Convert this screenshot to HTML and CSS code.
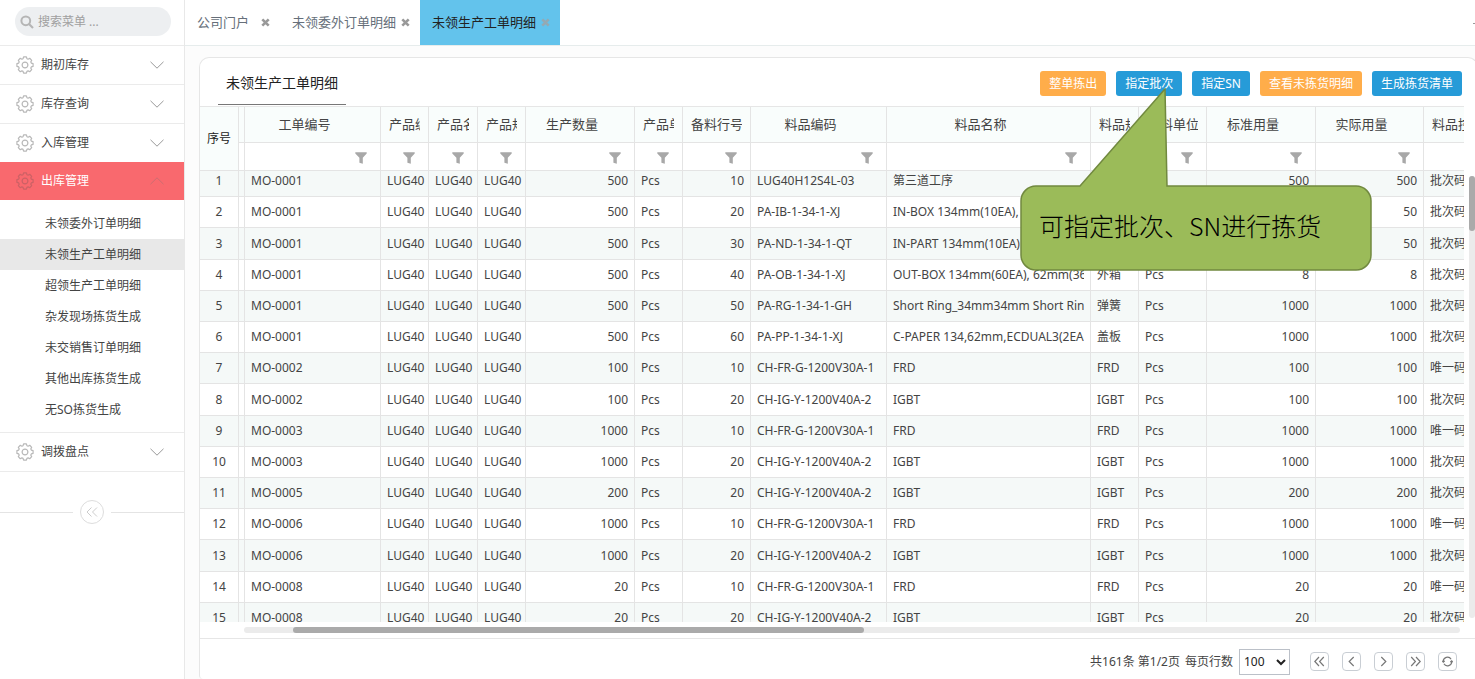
FILE: index.html
```html
<!DOCTYPE html>
<html lang="zh-CN">
<head>
<meta charset="utf-8">
<title>未领生产工单明细</title>
<link rel="stylesheet" href="styles.css">
</head>
<body>
<svg class="defs" width="0" height="0" aria-hidden="true">
  <symbol id="gear" viewBox="0 0 18 18"><g fill="none" stroke="currentColor" stroke-width="1.2" stroke-linejoin="round" transform="translate(9 9)"><path d="M-1.420-8.080H1.420L1.930-6.310 3.100-5.830 4.700-6.720 6.720-4.700 5.830-3.100 6.310-1.930 8.080-1.420V1.420L6.310 1.930 5.830 3.100 6.720 4.700 4.700 6.720 3.100 5.830 1.930 6.310 1.420 8.080H-1.420L-1.930 6.310-3.100 5.830-4.700 6.720-6.720 4.700-5.830 3.100-6.310 1.930-8.080 1.420V-1.420L-6.310-1.930-5.830-3.100-6.720-4.700-4.700-6.720-3.100-5.830-1.930-6.310Z"/><circle r="2.900"/></g></symbol>
  <symbol id="chev" viewBox="0 0 14 8"><path d="M.5.8 7 7.200 13.500.8" fill="none" stroke="currentColor"/></symbol>
  <symbol id="funnel" viewBox="0 0 12 12"><path d="M.3.3h11.400v1.200L7.800 5.700V11.700L4.400 10.800V5.700L.3 1.500z" fill="currentColor"/></symbol>
  <symbol id="cross" viewBox="0 0 9 9"><path d="M1.300 1.300 7.700 7.700M7.700 1.300 1.300 7.700" stroke="currentColor" stroke-width="2.600"/></symbol>
</svg>
<div class="app">
  <nav class="side">
    <label class="search">
      <svg width="14" height="14" viewBox="0 0 14 14"><circle cx="5.800" cy="5.800" r="4.400" fill="none" stroke="#b5b5b5" stroke-width="2"/><path d="m9 9 4 4" stroke="#b5b5b5" stroke-width="2.200"/></svg>
      <input type="text" placeholder="搜索菜单 ..." aria-label="搜索菜单">
    </label>
    <button class="item"><svg class="gear"><use href="#gear"/></svg><span>期初库存</span><svg class="chev"><use href="#chev"/></svg></button>
    <button class="item"><svg class="gear"><use href="#gear"/></svg><span>库存查询</span><svg class="chev"><use href="#chev"/></svg></button>
    <button class="item"><svg class="gear"><use href="#gear"/></svg><span>入库管理</span><svg class="chev"><use href="#chev"/></svg></button>
    <button class="item open"><svg class="gear"><use href="#gear"/></svg><span>出库管理</span><svg class="chev"><use href="#chev"/></svg></button>
    <div class="sub">
      <a href="#">未领委外订单明细</a>
      <a href="#" class="current">未领生产工单明细</a>
      <a href="#">超领生产工单明细</a>
      <a href="#">杂发现场拣货生成</a>
      <a href="#">未交销售订单明细</a>
      <a href="#">其他出库拣货生成</a>
      <a href="#">无SO拣货生成</a>
    </div>
    <button class="item last"><svg class="gear"><use href="#gear"/></svg><span>调拨盘点</span><svg class="chev"><use href="#chev"/></svg></button>
    <div class="fold"><button aria-label="收起菜单"><svg width="12" height="10" viewBox="0 0 12 10"><path d="M5.500.5 1 5l4.500 4.500M11 .5 6.500 5 11 9.500" fill="none" stroke="#ccc"/></svg></button></div>
  </nav>
  <main class="main">
    <header class="tabs">
      <div class="tab"><a href="#">公司门户</a><button aria-label="关闭"><svg width="9" height="9"><use href="#cross"/></svg></button></div>
      <div class="tab"><a href="#">未领委外订单明细</a><button aria-label="关闭"><svg width="9" height="9"><use href="#cross"/></svg></button></div>
      <div class="tab active"><a href="#">未领生产工单明细</a><button aria-label="关闭"><svg width="9" height="9"><use href="#cross"/></svg></button></div>
      <span class="more"></span>
    </header>
    <section class="panel">
      <div class="bar">
        <h1>未领生产工单明细</h1>
        <div class="actions">
          <button class="orange">整单拣出</button>
          <button>指定批次</button>
          <button>指定SN</button>
          <button class="orange">查看未拣货明细</button>
          <button>生成拣货清单</button>
        </div>
      </div>
      <div class="grid">
        <div class="view">
          <table>
            <colgroup id="cols"></colgroup>
            <thead id="head"></thead>
            <tbody id="rows"></tbody>
          </table>
        </div>
        <div class="vbar"><i></i></div>
        <div class="hbar"><i></i></div>
      </div>
      <footer class="pager">
        <span>共161条 第1/2页</span>
        <label for="size">每页行数</label>
        <select id="size"><option>100</option></select>
        <div class="pages">
          <button aria-label="首页"><svg viewBox="0 0 11 11"><path d="M5 1 .8 5.500 5 10M9.800 1 5.600 5.500 9.800 10"/></svg></button>
          <button aria-label="上一页"><svg viewBox="0 0 11 11"><path d="M7.700 1 3.200 5.500l4.500 4.500"/></svg></button>
          <button aria-label="下一页"><svg viewBox="0 0 11 11"><path d="m3.300 1 4.500 4.500L3.300 10"/></svg></button>
          <button aria-label="末页"><svg viewBox="0 0 11 11"><path d="M1.200 1l4.200 4.500L1.200 10M6 1l4.200 4.500L6 10"/></svg></button>
          <button aria-label="刷新"><svg viewBox="0 0 11 11"><path d="M1.300 5.800A4.200 4.200 0 0 1 9.100 3.300M9.700 5.200A4.200 4.200 0 0 1 1.900 7.700M.2 4.800l1.100 1.300 1.400-1M8.300 5.900l1.400-1 1.100 1.300"/></svg></button>
        </div>
      </footer>
    </section>
    <div class="callout">
      <svg viewBox="0 0 352 184" width="352" height="184"><path d="M16 98H60L145 1 147 98H336A15 15 0 0 1 351 113V167A15 15 0 0 1 336 182H16A15 15 0 0 1 1 167V113A15 15 0 0 1 16 98Z" fill="#9bbb59" stroke="#71893f" stroke-width="1.500"/></svg>
      <p>可指定批次、SN进行拣货</p>
    </div>
  </main>
</div>
<script src="grid.js"></script>
</body>
</html>
```
FILE: styles.css
```css
* { box-sizing: border-box; }
body {
  margin: 0;
  font: 12px/18px "Noto Sans", "Noto Sans CJK SC", sans-serif;
  color: #444;
  background: #fcfcfc;
}
button, input, select { font: inherit; color: inherit; }
button { padding: 0; border: 0; background: none; cursor: pointer; }
a { color: inherit; text-decoration: none; }
.defs { position: absolute; }
.app { display: flex; height: 100vh; overflow: hidden; }

.side { flex: none; width: 185px; background: #fff; border-right: 1px solid #e8e8e8; }
.search {
  display: flex; align-items: center; gap: 4px;
  height: 29px; margin: 7px 13px 9px 15px; padding: 0 5px;
  border-radius: 15px; background: #edeff1;
}
.search svg { flex: none; }
.search input { flex: 1; min-width: 0; padding: 0; border: 0; outline: 0; background: none; }
.search input::placeholder { color: #a0a0a0; opacity: 1; }
.item {
  display: flex; align-items: center; width: 100%; height: 39px;
  padding: 0 20px 0 16px; border-top: 1px solid #ebebeb; text-align: left;
}
.item span { flex: 1; }
.gear { width: 18px; height: 18px; margin-right: 7px; color: #b8b8b8; }
.chev { width: 14px; height: 8px; color: #999; }
.open { height: 38px; border: 0; background: #f9696e; color: #fff; }
.open .gear { color: #cc6165; }
.open .chev { color: #cc6d71; transform: rotate(180deg); }
.last { height: 40px; border-bottom: 1px solid #ebebeb; }
.sub { padding: 8px 0 7px; }
.sub a { display: block; padding: 0 0 0 45px; line-height: 31px; }
.sub .current { background: #e8e8e8; }
.fold { display: flex; align-items: center; gap: 7px; margin-top: 28px; }
.fold::before, .fold::after { content: ""; flex: 1; height: 1px; background: #e4e4e4; }
.fold button {
  display: grid; place-items: center; width: 24px; height: 24px;
  border: 1px solid #ddd; border-radius: 50%;
}

.main { position: relative; flex: 1; min-width: 0; display: flex; flex-direction: column; overflow: hidden; }
.tabs { display: flex; flex: none; height: 46px; background: #fff; border-bottom: 1px solid #e6ecec; font-size: 13px; }
.tab {
  display: flex; align-items: center; justify-content: space-between;
  min-width: 95px; height: 45px; padding: 0 10px 1px 12px; color: #666f7a;
}
.tab + .tab { min-width: 140px; }
.tab button { display: grid; color: #999; }
.active { background: #63c3ec; color: #222; }
.active button { color: #94a9b3; }
.more { width: 2px; height: 1px; margin: 23px 0 0 auto; background: #999; }

.panel {
  flex: 1; min-height: 0; display: flex; flex-direction: column;
  margin: 11px -3px 0 14px; background: #fff;
  border: 1px solid #e6e6e6; border-bottom: 0; border-radius: 10px 10px 4px 4px;
}
.bar { display: flex; align-items: center; justify-content: space-between; flex: none; height: 48px; padding: 0 15px 0 18px; }
.bar h1 {
  align-self: stretch; margin: 0 0 1px; padding: 0 8px;
  border-bottom: 1px solid #777; color: #222;
  font-size: 14px; font-weight: 400; line-height: 50px;
}
.actions { display: flex; gap: 10px; margin-top: 3px; }
.actions button { height: 25px; padding: 0 9px; border-radius: 3px; background: #269bd8; color: #fff; }
.actions .orange { background: #ffad4a; }

.grid {
  flex: 1; min-height: 0; display: grid;
  grid-template: minmax(0, 1fr) 16px / minmax(0, 1fr) 13px;
}
.view { overflow: hidden; border-top: 1px solid #e6e6e6; }
table { width: 100%; min-width: 1272px; table-layout: fixed; border-collapse: separate; border-spacing: 0; }
th, td {
  height: 31px; padding: 0 6px; overflow: hidden; white-space: nowrap;
  border-right: 1px solid #e4e4e4; border-bottom: 1px solid #e4e4e4;
  font-weight: 400; text-align: left;
}
td:last-child, th:last-child { border-right: 0; }
th { height: 36px; padding: 0 8px 2px; background: #f9fdfc; font-size: 13px; }
th div { overflow: hidden; text-align: center; }
.name div { overflow: hidden; }
th div::after { content: ""; display: inline-block; width: 16px; }
th.no { padding: 0; color: #222; font-size: 12px; text-align: center; }
.filters td { height: 28px; padding: 2px 13px 0 0; text-align: right; }
.filters svg { display: block; width: 12px; height: 12px; margin-left: auto; color: #a8a8a8; }
tbody tr:nth-child(odd) td { background: #f5f9f8; }
tbody tr:first-child td { height: 26px; padding-bottom: 5px; }
tbody tr:nth-child(5n+3) td { height: 32px; }
tbody .no { text-align: center; }
.num { text-align: right; }
tbody td:nth-child(2), th.gap { padding: 0; }

.vbar { margin: 70px 0 4px 5px; width: 6px; border-radius: 3px; background: #ebebeb; }
.vbar i { display: block; width: 6px; height: 12.5%; border-radius: 3px; background: #aaa; }
.hbar { align-self: start; height: 6px; margin: 5px 4px 0 44px; border-radius: 3px; background: #ebebeb; }
.hbar i { display: block; width: 47%; height: 6px; margin-left: 4%; border-radius: 3px; background: #aaa; }

.pager {
  flex: none; display: flex; align-items: center; justify-content: flex-end;
  height: 41px; padding: 5px 20px 0 0; border-top: 1px solid #e6e6e6;
}
.pager label { margin: 0 6px 0 5px; }
.pager select { width: 51px; height: 26px; border: 1px solid #bbc0c8; border-radius: 0; background: #fff; color: #222; }
.pages { display: flex; gap: 13px; margin-left: 20px; }
.pages button { display: grid; place-items: center; width: 19px; height: 19px; border: 1px solid #c9ced4; border-radius: 4px; }
.pages svg { width: 11px; height: 11px; fill: none; stroke: #777; stroke-width: 1.2; }

.callout { position: absolute; top: 88px; right: 103px; width: 352px; height: 184px; }
.callout svg { display: block; }
.callout p {
  position: absolute; left: 19px; top: 119px; margin: 0; color: #000;
  font-size: 25px; line-height: 36px; font-weight: 300; white-space: nowrap;
  font-family: "Noto Sans CJK SC", sans-serif;
}
```
FILE: grid.js
```js
const columns = [
  ["序号", 39], ["", 6], ["工单编号", 136], ["产品编码", 48], ["产品名称", 49], ["产品规格", 48],
  ["生产数量", 109], ["产品单位", 48], ["备料行号", 68], ["料品编码", 136], ["料品名称", 204],
  ["料品规格", 48], ["备料单位", 68], ["标准用量", 109], ["实际用量", 108], ["料品控制", 48]
];
const numeric = new Set([6, 8, 13, 14]);
const P = "LUG40";
const records = [
  ["MO-0001", 500, 10, "LUG40H12S4L-03", "第三道工序", "", 500, 500, "批次码"],
  ["MO-0001", 500, 20, "PA-IB-1-34-1-XJ", "IN-BOX 134mm(10EA),", "", "", 50, "批次码"],
  ["MO-0001", 500, 30, "PA-ND-1-34-1-QT", "IN-PART 134mm(10EA)", "", "", 50, "批次码"],
  ["MO-0001", 500, 40, "PA-OB-1-34-1-XJ", "OUT-BOX 134mm(60EA), 62mm(360EA)", "外箱", 8, 8, "批次码"],
  ["MO-0001", 500, 50, "PA-RG-1-34-1-GH", "Short Ring_34mm34mm Short Ring", "弹簧", 1000, 1000, "批次码"],
  ["MO-0001", 500, 60, "PA-PP-1-34-1-XJ", "C-PAPER 134,62mm,ECDUAL3(2EA", "盖板", 1000, 1000, "批次码"],
  ["MO-0002", 100, 10, "CH-FR-G-1200V30A-1", "FRD", "FRD", 100, 100, "唯一码"],
  ["MO-0002", 100, 20, "CH-IG-Y-1200V40A-2", "IGBT", "IGBT", 100, 100, "批次码"],
  ["MO-0003", 1000, 10, "CH-FR-G-1200V30A-1", "FRD", "FRD", 1000, 1000, "唯一码"],
  ["MO-0003", 1000, 20, "CH-IG-Y-1200V40A-2", "IGBT", "IGBT", 1000, 1000, "批次码"],
  ["MO-0005", 200, 20, "CH-IG-Y-1200V40A-2", "IGBT", "IGBT", 200, 200, "批次码"],
  ["MO-0006", 1000, 10, "CH-FR-G-1200V30A-1", "FRD", "FRD", 1000, 1000, "唯一码"],
  ["MO-0006", 1000, 20, "CH-IG-Y-1200V40A-2", "IGBT", "IGBT", 1000, 1000, "批次码"],
  ["MO-0008", 20, 10, "CH-FR-G-1200V30A-1", "FRD", "FRD", 20, 20, "唯一码"],
  ["MO-0008", 20, 20, "CH-IG-Y-1200V40A-2", "IGBT", "IGBT", 20, 20, "批次码"]
];

document.getElementById("cols").innerHTML = columns.map(c => `<col style="width:${c[1]}px">`).join("");

const last = columns.length - 1;
const funnel = '<svg><use href="#funnel"/></svg>';
document.getElementById("head").innerHTML =
  "<tr>" + columns.map((c, i) =>
    i === 0 ? `<th class="no" rowspan="2">${c[0]}</th>`
    : i === 1 ? '<th class="gap"></th>'
    : `<th><div>${c[0]}</div></th>`).join("") + "</tr>" +
  '<tr class="filters">' + columns.slice(1).map((c, i) => `<td>${i && i + 1 < last ? funnel : ""}</td>`).join("") + "</tr>";

const cellClass = i => i === 0 ? "no" : i === 10 ? "name" : numeric.has(i) ? "num" : "txt";

document.getElementById("rows").innerHTML = records.map((r, n) => {
  const [order, qty, line, code, name, spec, std, real, control] = r;
  const cells = [n + 1, "", order, P, P, P, qty, "Pcs", line, code, name, spec, spec ? "Pcs" : "", std, real, control];
  return "<tr>" + cells.map((v, i) => `<td class="${cellClass(i)}"><div>${v}</div></td>`).join("") + "</tr>";
}).join("");
```
